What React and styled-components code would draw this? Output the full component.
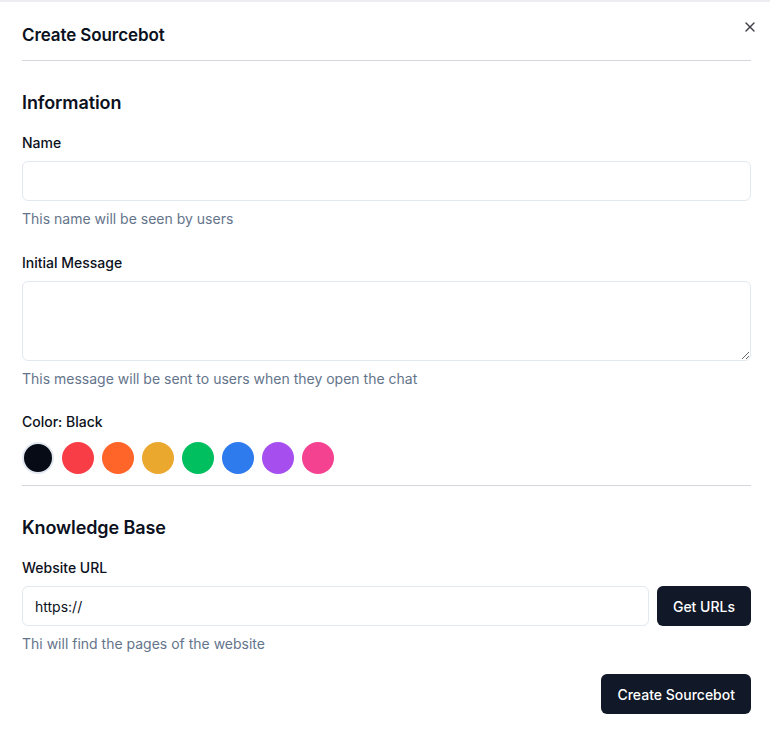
import React, { useState } from "react";
import styled, { createGlobalStyle } from "styled-components";
import { X } from "lucide-react";

const GlobalStyle = createGlobalStyle`
  body {
    margin: 0;
    background: #ffffff;
    font-family: Inter, "Noto Sans", sans-serif;
    color: #0b1120;
  }
  * { box-sizing: border-box; }
`;

const Dialog = styled.div`
  position: relative;
  width: 770px;
  min-height: 736px;
  border-top: 2px solid #eceef1;
  padding: 0 19px 0 22px;
  display: flex;
  flex-direction: column;
`;

const Header = styled.header`
  display: flex;
  align-items: center;
  height: 59px;
  padding-top: 8px;
  border-bottom: 1px solid #d4d6db;
`;

const Title = styled.h2`
  margin: 0;
  font-size: 17px;
  font-weight: 600;
  letter-spacing: -0.1px;
`;

const Close = styled.button`
  position: absolute;
  top: 17px;
  right: 12px;
  border: none;
  background: none;
  padding: 0;
  color: #3f3f46;
  display: flex;
  cursor: pointer;
`;

const Section = styled.section`
  display: flex;
  flex-direction: column;
  padding-top: 28px;
`;

const Heading = styled.h3`
  margin: 0 0 16px;
  font-size: 18px;
  line-height: 28px;
  font-weight: 600;
  letter-spacing: -0.1px;
`;

const Field = styled.div`
  display: flex;
  flex-direction: column;
  margin-bottom: ${(p) => p.$mb ?? 24}px;
`;

const Label = styled.label`
  font-size: 14px;
  line-height: 20px;
  font-weight: 500;
  margin-bottom: ${(p) => p.$gap ?? 8}px;
`;

const Input = styled.input`
  height: 40px;
  width: 100%;
  min-width: 0;
  border: 1px solid #e2e8f0;
  border-radius: 6px;
  padding: 0 12px;
  font-family: inherit;
  font-size: 14px;
  color: #0b1120;
  outline: none;
`;

const TextArea = styled.textarea`
  height: 80px;
  border: 1px solid #e2e8f0;
  border-radius: 6px;
  padding: 8px 12px;
  font-family: inherit;
  font-size: 14px;
  outline: none;
`;

const Hint = styled.p`
  margin: 8px 0 0;
  font-size: 14px;
  line-height: 20px;
  color: #64748b;
`;

const Swatches = styled.div`
  display: flex;
  gap: 8px;
`;

const Swatch = styled.button`
  width: 32px;
  height: 32px;
  border-radius: 50%;
  padding: 0;
  border: ${(p) => (p.$active ? "2px solid #e2e8f0" : "none")};
  background: ${(p) => p.$color};
  cursor: pointer;
`;

const Divider = styled.hr`
  margin: 11px 0 0;
  border: none;
  border-top: 1px solid #d4d6db;
`;

const Row = styled.div`
  display: flex;
  gap: 8px;
`;

const Button = styled.button`
  flex-shrink: 0;
  height: 40px;
  padding: 0 16px;
  border: none;
  border-radius: 6px;
  background: #111827;
  color: #ffffff;
  font-family: inherit;
  font-size: 14px;
  font-weight: 500;
  cursor: pointer;
  white-space: nowrap;
`;

const Footer = styled.div`
  display: flex;
  justify-content: flex-end;
  margin-top: 20px;
`;

const colors = [
  ["Black", "#060b16"],
  ["Red", "#f93d47"],
  ["Orange", "#ff6428"],
  ["Amber", "#eba82e"],
  ["Green", "#00bf5f"],
  ["Blue", "#2e7bee"],
  ["Purple", "#a64fee"],
  ["Pink", "#f44290"],
];

export default function App() {
  const [color, setColor] = useState("Black");
  return (
    <>
      <GlobalStyle />
      <Dialog>
        <Header>
          <Title>Create Sourcebot</Title>
        </Header>
        <Close aria-label="Close">
          <X size={16} strokeWidth={2} />
        </Close>

        <Section>
          <Heading>Information</Heading>
          <Field>
            <Label>Name</Label>
            <Input />
            <Hint>This name will be seen by users</Hint>
          </Field>
          <Field $mb={23}>
            <Label>Initial Message</Label>
            <TextArea />
            <Hint>This message will be sent to users when they open the chat</Hint>
          </Field>
          <Field $mb={0}>
            <Label $gap={10}>Color: {color}</Label>
            <Swatches>
              {colors.map(([name, c]) => (
                <Swatch
                  key={name}
                  $color={c}
                  $active={color === name}
                  onClick={() => setColor(name)}
                  aria-label={name}
                />
              ))}
            </Swatches>
          </Field>
        </Section>
        <Divider />

        <Section>
          <Heading>Knowledge Base</Heading>
          <Field $mb={0}>
            <Label>Website URL</Label>
            <Row>
              <Input defaultValue="https://" />
              <Button>Get URLs</Button>
            </Row>
            <Hint>Thi will find the pages of the website</Hint>
          </Field>
          <Footer>
            <Button>Create Sourcebot</Button>
          </Footer>
        </Section>
      </Dialog>
    </>
  );
}
